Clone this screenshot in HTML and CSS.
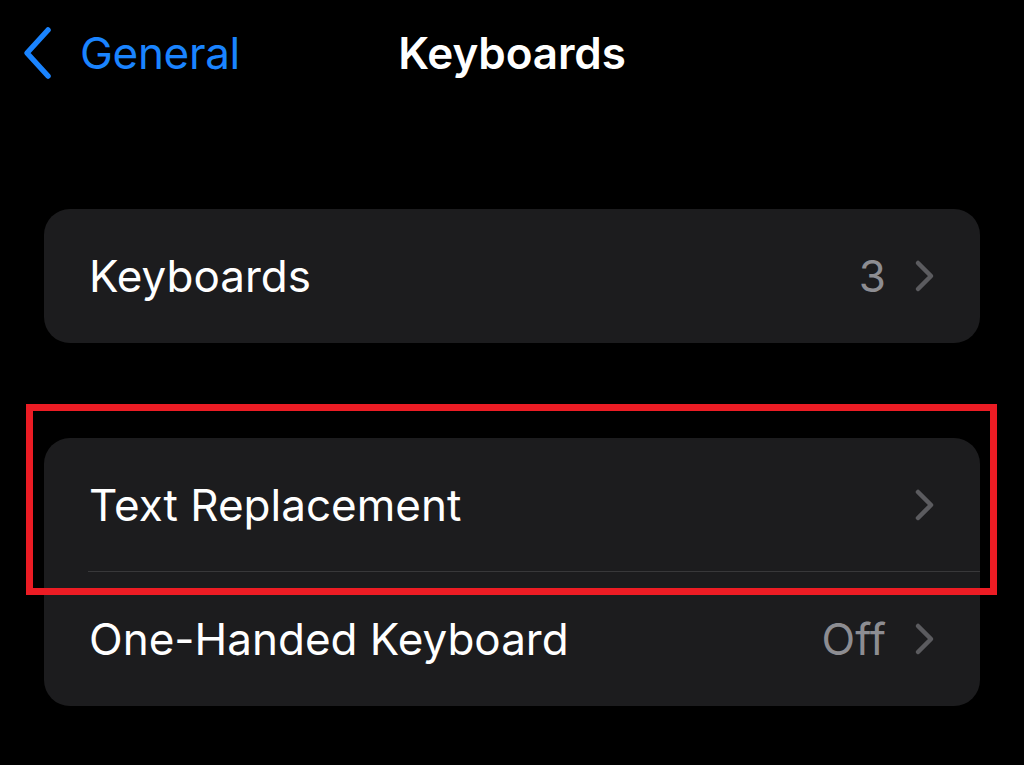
FILE: index.html
```html
<!DOCTYPE html>
<html lang="en">
<head>
<meta charset="UTF-8">
<meta name="viewport" content="width=device-width, initial-scale=1.0">
<title>Keyboards</title>
<link rel="stylesheet" href="styles.css">
</head>
<body>
    <header class="nav-bar">
        <a class="back-link" href="#">
            <svg class="back-icon" width="30" height="54" viewBox="0 0 30 54">
                <path d="M26 4 L5 27 L26 50" fill="none" stroke="#1a84ff" stroke-width="5.5" stroke-linecap="round" stroke-linejoin="round"/>
            </svg>
            <span>General</span>
        </a>
        <h1 class="nav-title">Keyboards</h1>
    </header>

    <main class="settings">
        <section class="group">
            <div class="row">
                <span class="row-label">Keyboards</span>
                <span class="row-detail">3</span>
                <svg class="chevron" width="22" height="34" viewBox="0 0 22 34">
                    <path d="M4 4 L17 17 L4 30" fill="none" stroke="#5b5b5f" stroke-width="4.5" stroke-linecap="round" stroke-linejoin="round"/>
                </svg>
            </div>
        </section>

        <section class="group">
            <div class="row row-divided">
                <span class="row-label">Text Replacement</span>
                <svg class="chevron" width="22" height="34" viewBox="0 0 22 34">
                    <path d="M4 4 L17 17 L4 30" fill="none" stroke="#5b5b5f" stroke-width="4.5" stroke-linecap="round" stroke-linejoin="round"/>
                </svg>
            </div>
            <div class="row">
                <span class="row-label">One-Handed Keyboard</span>
                <span class="row-detail">Off</span>
                <svg class="chevron" width="22" height="34" viewBox="0 0 22 34">
                    <path d="M4 4 L17 17 L4 30" fill="none" stroke="#5b5b5f" stroke-width="4.5" stroke-linecap="round" stroke-linejoin="round"/>
                </svg>
            </div>
        </section>
    </main>

    <div class="highlight-box"></div>
</body>
</html>
```

FILE: styles.css
```css
body {
    margin: 0;
    padding: 0;
    height: 765px;
    background: #000;
    font-family: Inter, "Noto Sans", sans-serif;
    color: #fff;
    overflow: hidden;
    position: relative;
}

.nav-bar {
    position: relative;
    height: 106px;
    display: flex;
    align-items: center;
    justify-content: center;
}

.back-link {
    position: absolute;
    left: 22px;
    top: 26px;
    display: flex;
    align-items: center;
    gap: 28px;
    color: #1a84ff;
    text-decoration: none;
    font-size: 44px;
    letter-spacing: -0.3px;
}

.nav-title {
    margin: 0;
    font-size: 44px;
    font-weight: 600;
    letter-spacing: -0.1px;
}

.settings {
    padding: 103px 44px 0;
    display: flex;
    flex-direction: column;
    gap: 95px;
}

.group {
    background: #1c1c1e;
    border-radius: 26px;
    overflow: hidden;
}

.row {
    height: 134px;
    display: flex;
    align-items: center;
    padding: 0 44px 0 45px;
    position: relative;
}

.row-divided::after {
    content: "";
    position: absolute;
    left: 44px;
    right: 0;
    bottom: 0;
    height: 1.5px;
    background: #38383a;
}

.row-label {
    flex: 1;
    font-size: 44px;
    letter-spacing: 0;
}

.row-detail {
    font-size: 44px;
    color: #8d8d92;
    margin-right: 28px;
}

.chevron {
    display: block;
}

.highlight-box {
    position: absolute;
    left: 26px;
    top: 404px;
    width: 957px;
    height: 177px;
    border: 7px solid #ec1c24;
}
```
